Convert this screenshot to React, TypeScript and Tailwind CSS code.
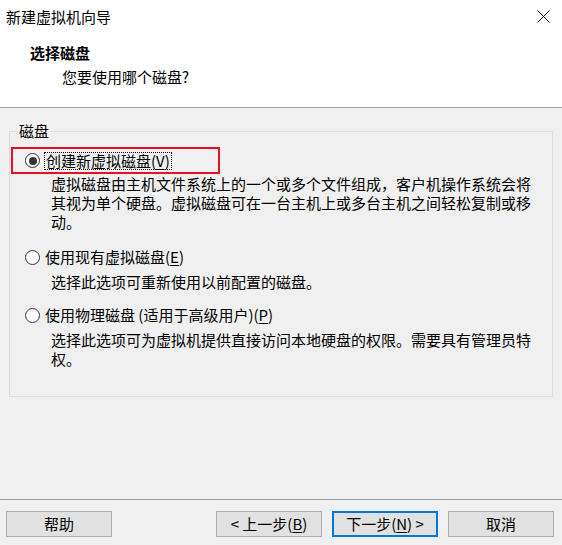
import React from 'react';

const font = { fontFamily: '"Noto Sans CJK SC", "Noto Sans", sans-serif' };

const Radio = ({ checked }: { checked?: boolean }) => (
  <span className="box-border flex h-[15px] min-h-[15px] w-[15px] min-w-[15px] shrink-0 items-center justify-center rounded-full border border-[#333333] bg-white">
    {checked && <span className="h-[8px] w-[8px] rounded-full bg-[#333333]" />}
  </span>
);

const Key = ({ k }: { k: string }) => (
  <>
    (<span className="underline underline-offset-2">{k}</span>)
  </>
);

const Btn = ({ children, primary }: { children: React.ReactNode; primary?: boolean }) => (
  <button
    className={
      'flex h-[26px] w-[106px] items-center justify-center bg-[#e1e1e1] text-[15px] leading-[20px] text-black ' +
      (primary ? 'border-2 border-[#0078d7]' : 'border border-[#adadad]')
    }
  >
    {children}
  </button>
);

export default function App() {
  return (
    <div className="flex h-[545px] w-[562px] flex-col bg-[#f0f0f0] text-[15px] leading-[20px] text-black" style={font}>
      {/* header */}
      <div className="h-[108px] shrink-0 border-b border-[#a0a0a0] bg-white">
        <div className="flex h-[34px] items-center justify-between pl-[6px] pr-[12px]">
          <span>新建虚拟机向导</span>
          <svg width="13" height="13" viewBox="0 0 13 13" className="-mt-[1px]">
            <path d="M0.5 0.5 L12.5 12.5 M12.5 0.5 L0.5 12.5" stroke="#000" strokeWidth="1" />
          </svg>
        </div>
        <div className="mt-[9px] pl-[30px] font-bold">选择磁盘</div>
        <div className="mt-[4px] pl-[62px]">您要使用哪个磁盘?</div>
      </div>

      {/* body */}
      <div className="flex-1">
        <fieldset className="mx-[9px] mt-[13px] h-[276px] border border-[#dcdcdc] px-0">
          <legend className="ml-[7px] px-[2px]">磁盘</legend>

          <div className="ml-[1px] mt-[6px] flex h-[27px] w-[209px] items-center gap-[4px] border-2 border-[#e81123] pl-[12px]">
            <Radio checked />
            <span className="border border-dotted border-black px-[1px] leading-[16px]">
              创建新虚拟磁盘<Key k="V" />
            </span>
          </div>
          <p className="ml-[41px] w-[484px] leading-[19px]">
            虚拟磁盘由主机文件系统上的一个或多个文件组成，客户机操作系统会将其视为单个硬盘。虚拟磁盘可在一台主机上或多台主机之间轻松复制或移动。
          </p>

          <div className="ml-[15px] mt-[16px] flex h-[20px] items-center gap-[5px]">
            <Radio />
            <span>
              使用现有虚拟磁盘<Key k="E" />
            </span>
          </div>
          <p className="ml-[41px] mt-[5px] w-[484px] leading-[19px]">选择此选项可重新使用以前配置的磁盘。</p>

          <div className="ml-[15px] mt-[14px] flex h-[20px] items-center gap-[5px]">
            <Radio />
            <span>
              使用物理磁盘 (适用于高级用户)<Key k="P" />
            </span>
          </div>
          <p className="ml-[41px] mt-[5px] w-[484px] leading-[19px]">
            选择此选项可为虚拟机提供直接访问本地硬盘的权限。需要具有管理员特权。
          </p>
        </fieldset>
      </div>

      {/* footer */}
      <div className="flex h-[46px] shrink-0 items-start border-t border-[#a0a0a0] px-[6px] pt-[11px]">
        <Btn>帮助</Btn>
        <div className="ml-auto flex gap-[10px] pr-[2px]">
          <Btn>
            &lt; 上一步<Key k="B" />
          </Btn>
          <Btn primary>
            下一步<Key k="N" /> &gt;
          </Btn>
          <Btn>取消</Btn>
        </div>
      </div>
    </div>
  );
}
